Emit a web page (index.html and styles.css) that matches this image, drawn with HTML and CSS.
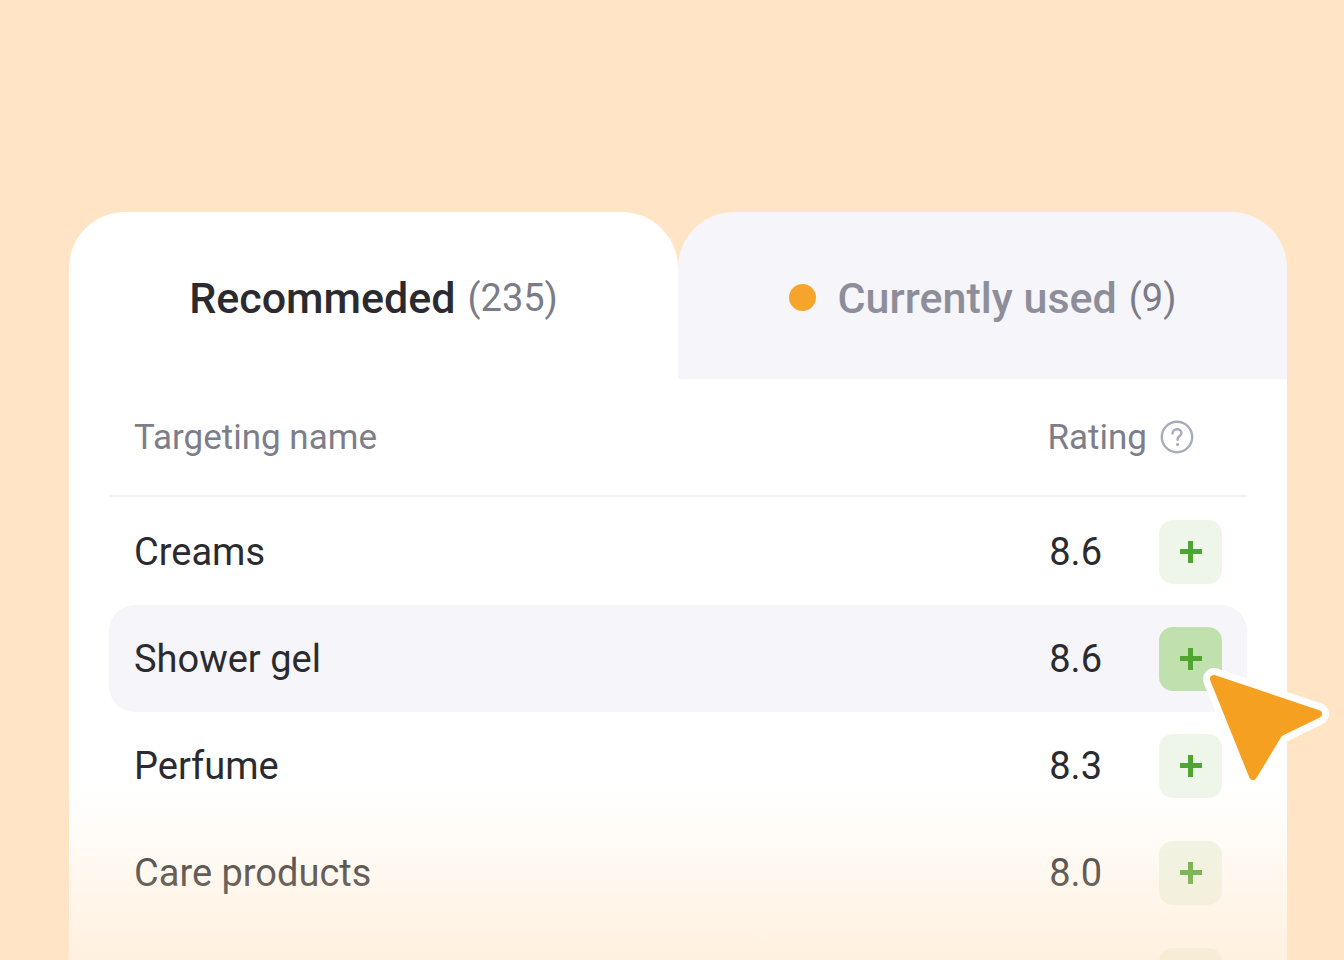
FILE: index.html
```html
<!DOCTYPE html>
<html lang="en">
<head>
<meta charset="utf-8">
<title>Targeting</title>
<link rel="stylesheet" href="styles.css">
</head>
<body>
<div class="page">
  <div class="card">
    <div class="tabs">
      <div class="tab tab-active">
        <span class="tab-title">Recommeded</span><span class="tab-count">(235)</span>
      </div>
      <div class="tab tab-inactive">
        <span class="dot"></span><span class="tab-title muted">Currently used</span><span class="tab-count">(9)</span>
      </div>
    </div>
    <div class="body">
      <div class="head-row">
        <span class="head-name">Targeting name</span>
        <span class="head-rating">Rating
          <svg class="help" viewBox="0 0 34 34" width="34" height="34">
            <circle cx="17" cy="17" r="15.2" fill="none" stroke="#A7ABBC" stroke-width="2.4"/>
            <path d="M12.6 13.6c0-2.6 2-4.4 4.5-4.4s4.4 1.7 4.4 3.9c0 2.8-3.4 3.2-3.9 5.6v1.1" fill="none" stroke="#A7ABBC" stroke-width="2.4" stroke-linecap="round"/>
            <circle cx="17.6" cy="24.6" r="1.6" fill="#A7ABBC"/>
          </svg>
        </span>
      </div>
      <div class="divider"></div>
      <div class="row">
        <span class="name">Creams</span>
        <span class="rating">8.6</span>
        <span class="add"><span class="plus"></span></span>
      </div>
      <div class="row row-hover">
        <span class="name">Shower gel</span>
        <span class="rating">8.6</span>
        <span class="add add-hover"><span class="plus"></span></span>
      </div>
      <div class="row">
        <span class="name">Perfume</span>
        <span class="rating">8.3</span>
        <span class="add"><span class="plus"></span></span>
      </div>
      <div class="row">
        <span class="name">Care products</span>
        <span class="rating">8.0</span>
        <span class="add"><span class="plus"></span></span>
      </div>
      <div class="row">
        <span class="name"></span>
        <span class="add"><span class="plus"></span></span>
      </div>
    </div>
    <svg class="cursor" viewBox="0 0 140 135" width="140" height="135">
      <path d="M15 19 L119 54 L80 73 L54 116 Z" fill="#FFFFFF" stroke="#FFFFFF" stroke-width="22" stroke-linejoin="round"/>
      <path d="M15 19 L119 54 L80 73 L54 116 Z" fill="#F5A020" stroke="#F5A020" stroke-width="8" stroke-linejoin="round"/>
    </svg>
  </div>
  <div class="fade"></div>
</div>
</body>
</html>
```
FILE: styles.css
```css
html, body {
  margin: 0;
  padding: 0;
}
body {
  background: #FFE5C5;
  font-family: Roboto, "Liberation Sans", Arial, sans-serif;
  width: 1344px;
  height: 960px;
  overflow: hidden;
}
.page {
  position: relative;
  width: 1344px;
  height: 960px;
  padding-top: 212px;
  box-sizing: border-box;
  overflow: hidden;
}
.card {
  position: relative;
  margin-left: 69px;
  width: 1218px;
}
.tabs {
  display: flex;
  height: 167px;
}
.tab {
  flex: 1;
  display: flex;
  align-items: center;
  justify-content: center;
  border-radius: 56px 56px 0 0;
  padding-top: 4px;
  box-sizing: border-box;
}
.tab-active {
  background: #FFFFFF;
}
.tab-inactive {
  background: #F5F5FA;
}
.tab-title {
  font-size: 43px;
  font-weight: 500;
  color: #2B2B2F;
}
.tab-title.muted {
  color: #8D8E9A;
}
.tab-count {
  font-size: 38px;
  font-weight: 400;
  color: #7B7C88;
  margin-left: 12px;
}
.dot {
  width: 27px;
  height: 27px;
  border-radius: 50%;
  background: #F5A52C;
  margin-right: 22px;
}
.body {
  background: #FFFFFF;
  padding: 0 40px;
  height: 620px;
}
.head-row {
  display: flex;
  align-items: center;
  justify-content: space-between;
  height: 116px;
  padding: 0 53px 0 25px;
  box-sizing: border-box;
  font-size: 35px;
  color: #7D7E8A;
}
.head-rating {
  display: flex;
  align-items: center;
  gap: 13px;
}
.help {
  display: block;
}
.divider {
  height: 2px;
  background: #F2F2F6;
  margin-bottom: 1px;
}
.row {
  display: flex;
  align-items: center;
  height: 107px;
  padding: 0 25px 0 25px;
  border-radius: 26px;
  font-size: 38px;
  color: #2B2B2F;
}
.row-hover {
  background: #F5F5FA;
}
.name {
  flex: 1;
}
.rating {
  margin-right: 57px;
}
.add {
  width: 63px;
  height: 64px;
  border-radius: 14px;
  background: #EEF6E9;
  display: flex;
  align-items: center;
  justify-content: center;
}
.add-hover {
  background: #C0E1AE;
}
.plus {
  width: 22px;
  height: 22px;
  background:
    linear-gradient(#4FA530, #4FA530) center / 22px 5px no-repeat,
    linear-gradient(#4FA530, #4FA530) center / 5px 22px no-repeat;
}
.cursor {
  position: absolute;
  left: 1130px;
  top: 448px;
}
.fade {
  position: absolute;
  left: 0;
  right: 0;
  top: 790px;
  bottom: 0;
  background: linear-gradient(to bottom, rgba(255, 229, 197, 0) 0%, rgba(255, 229, 197, 0.55) 100%);
  pointer-events: none;
}
```
